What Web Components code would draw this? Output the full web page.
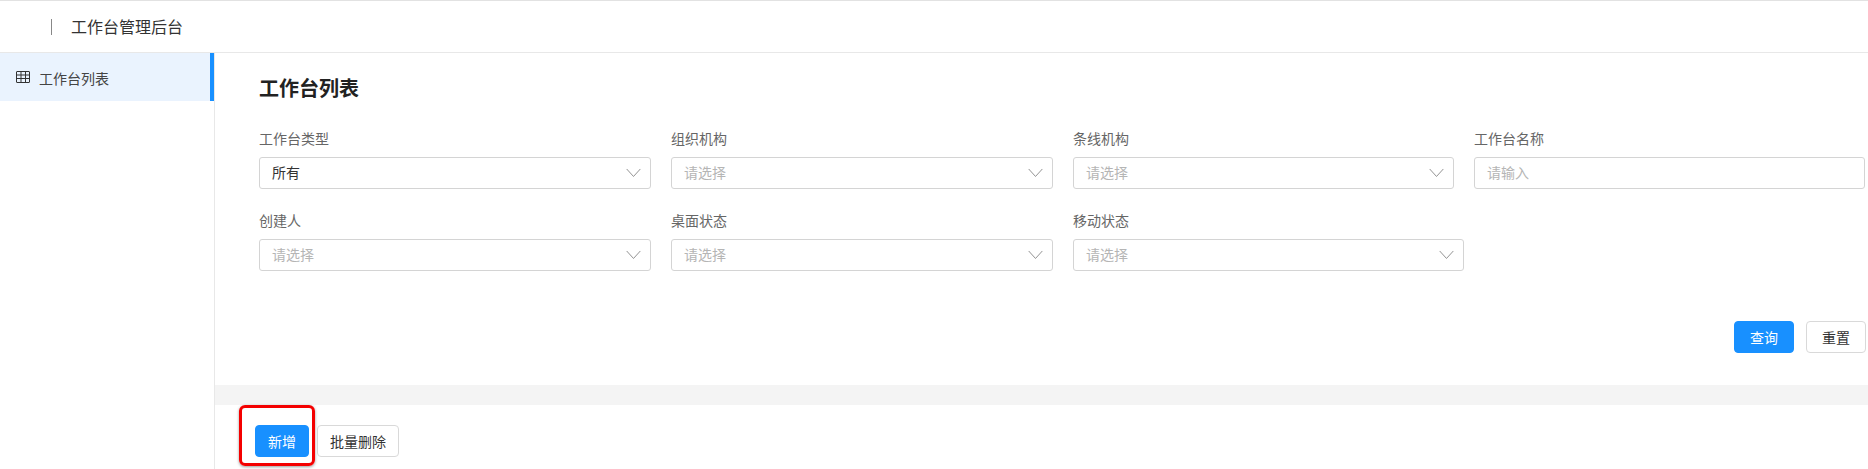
<!DOCTYPE html>
<html lang="zh">
<head>
<meta charset="utf-8">
<title>工作台管理后台</title>
<style>
  html, body { margin: 0; height: 100%; overflow: hidden; background: #fff; }
  body { font-family: "Noto Sans CJK SC", "Noto Sans", sans-serif; font-size: 14px; color: #333; }
</style>
</head>
<body>
<app-shell>
  <app-header slot="header">工作台管理后台</app-header>
  <side-nav slot="side"><nav-item active>工作台列表</nav-item></side-nav>
  <search-panel>
    <span slot="title">工作台列表</span>
    <form-field slot="row1" label="工作台类型" value="所有" style="width:392px"></form-field>
    <form-field slot="row1" label="组织机构" placeholder="请选择" style="width:382px"></form-field>
    <form-field slot="row1" label="条线机构" placeholder="请选择" style="width:381px"></form-field>
    <form-field slot="row1" label="工作台名称" placeholder="请输入" kind="input" style="width:391px"></form-field>
    <form-field slot="row2" label="创建人" placeholder="请选择" style="width:392px"></form-field>
    <form-field slot="row2" label="桌面状态" placeholder="请选择" style="width:382px"></form-field>
    <form-field slot="row2" label="移动状态" placeholder="请选择" style="width:391px"></form-field>
    <ui-button slot="actions" primary>查询</ui-button>
    <ui-button slot="actions">重置</ui-button>
  </search-panel>
  <table-toolbar>
    <ui-button primary style="width:54px">新增</ui-button>
    <ui-button style="width:82px">批量删除</ui-button>
  </table-toolbar>
</app-shell>

<script>
class AppShell extends HTMLElement {
  constructor() {
    super()
    this.attachShadow({ mode: 'open' }).innerHTML = `
      <style>
        :host { display: flex; flex-direction: column; height: 469px; border-top: 1px solid #e2e2e2; box-sizing: border-box; }
        .body { flex: 1; display: flex; min-height: 0; }
        main { flex: 1; min-width: 0; display: flex; flex-direction: column; }
      </style>
      <slot name="header"></slot>
      <div class="body">
        <slot name="side"></slot>
        <main><slot></slot></main>
      </div>`
  }
}

class AppHeader extends HTMLElement {
  constructor() {
    super()
    this.attachShadow({ mode: 'open' }).innerHTML = `
      <style>
        :host { display: flex; align-items: center; height: 52px; box-sizing: border-box; border-bottom: 1px solid #e8e8e8; padding: 0 0 2px 51px; font-size: 16px; color: #333; }
        i { width: 1px; height: 16px; background: #888; margin: 2px 19px 0 0; }
      </style>
      <i></i><slot></slot>`
  }
}

class SideNav extends HTMLElement {
  constructor() {
    super()
    this.attachShadow({ mode: 'open' }).innerHTML = `
      <style>
        :host { display: block; width: 215px; box-sizing: border-box; border-right: 1px solid #e8e8e8; }
      </style>
      <slot></slot>`
  }
}

class NavItem extends HTMLElement {
  constructor() {
    super()
    this.attachShadow({ mode: 'open' }).innerHTML = `
      <style>
        :host { display: flex; align-items: center; height: 48px; padding: 2px 0 0 16px; gap: 9px; font-size: 14px; color: #444; box-sizing: border-box; }
        :host([active]) { background: #eaf3fe; border-right: 4px solid #1890ff; }
        svg { width: 14px; height: 14px; flex: none; margin-top: -2px; }
      </style>
      <svg viewBox="0 0 14 14" fill="none" stroke="#333" stroke-width="1">
        <rect x="0.5" y="1.5" width="13" height="11" rx="0.5"/>
        <path d="M0.5 5h13M0.5 8.5h13M5 1.5v11M9.5 1.5v11"/>
      </svg>
      <slot></slot>`
  }
}

class SearchPanel extends HTMLElement {
  constructor() {
    super()
    this.attachShadow({ mode: 'open' }).innerHTML = `
      <style>
        :host { display: block; height: 332px; box-sizing: border-box; padding: 0 2px 0 44px; }
        h2 { margin: 0; height: 57px; padding-top: 13px; box-sizing: border-box; display: flex; align-items: center; font-size: 20px; line-height: 28px; font-weight: 700; color: #222; }
        .row { display: flex; gap: 20px; }
        .row.first { margin-top: 18px; }
        .row.second { margin-top: 21px; }
        .actions { display: flex; justify-content: flex-end; gap: 12px; margin-top: 50px; }
      </style>
      <h2><slot name="title"></slot></h2>
      <div class="row first"><slot name="row1"></slot></div>
      <div class="row second"><slot name="row2"></slot></div>
      <div class="actions"><slot name="actions"></slot></div>`
  }
}

class FormField extends HTMLElement {
  constructor() {
    super()
    const label = this.getAttribute('label') || ''
    const value = this.getAttribute('value')
    const text = value || this.getAttribute('placeholder') || ''
    const arrow = this.getAttribute('kind') === 'input' ? '' : `
      <svg viewBox="0 0 16 10" fill="none" stroke="#8c8c8c" stroke-width="1"><path d="M0.7 0.7 8 8.7 15.3 0.7"/></svg>`
    this.attachShadow({ mode: 'open' }).innerHTML = `
      <style>
        :host { display: block; flex: none; }
        label { display: block; height: 29px; line-height: 20px; font-size: 14px; color: #666; }
        .box { height: 32px; box-sizing: border-box; border: 1px solid #d4d4d4; border-radius: 3px; padding: 0 9px 0 12px; display: flex; align-items: center; justify-content: space-between; font-size: 14px; }
        .box span { margin-top: -2px; }
        .ph { color: #b5b5b5; }
        .val { color: #333; }
        svg { width: 15px; height: 10px; flex: none; }
      </style>
      <label>${label}</label>
      <div class="box"><span class="${value ? 'val' : 'ph'}">${text}</span>${arrow}</div>`
  }
}

class UiButton extends HTMLElement {
  constructor() {
    super()
    this.attachShadow({ mode: 'open' }).innerHTML = `
      <style>
        :host { display: inline-flex; align-items: center; justify-content: center; width: 60px; height: 32px; box-sizing: border-box; border: 1px solid #d9d9d9; border-radius: 4px; background: #fff; color: #333; font-size: 14px; }
        :host([primary]) { background: #1890ff; border-color: #1890ff; color: #fff; }
      </style>
      <slot></slot>`
  }
}

class TableToolbar extends HTMLElement {
  constructor() {
    super()
    this.attachShadow({ mode: 'open' }).innerHTML = `
      <style>
        :host { display: block; flex: 1; border-top: 20px solid #f4f4f4; box-sizing: border-box; padding: 20px 0 0 40px; position: relative; }
        .bar { display: flex; gap: 8px; }
        .mark { position: absolute; left: 24px; top: 0; width: 76px; height: 61px; box-sizing: border-box; border: 3.5px solid #f40000; border-radius: 6px; box-shadow: 0 1px 3px rgba(0,0,0,.4); pointer-events: none; }
      </style>
      <div class="bar"><slot></slot></div>
      <div class="mark"></div>`
  }
}

customElements.define('app-shell', AppShell)
customElements.define('app-header', AppHeader)
customElements.define('side-nav', SideNav)
customElements.define('nav-item', NavItem)
customElements.define('search-panel', SearchPanel)
customElements.define('form-field', FormField)
customElements.define('ui-button', UiButton)
customElements.define('table-toolbar', TableToolbar)
</script>
</body>
</html>
